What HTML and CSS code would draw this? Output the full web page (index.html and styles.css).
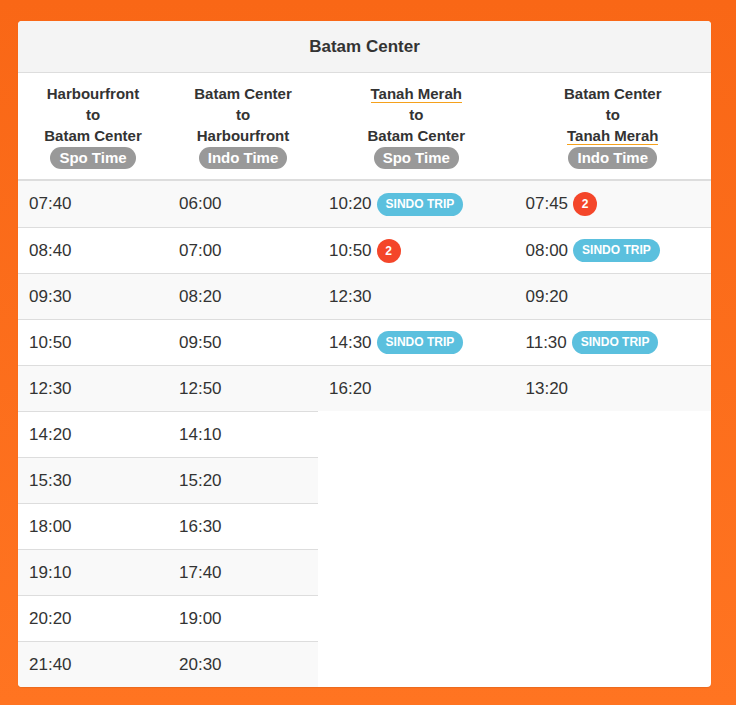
FILE: index.html
```html
<!DOCTYPE html>
<html lang="en">
<head>
<meta charset="utf-8">
<title>Batam Center Ferry Schedule</title>
<link rel="stylesheet" href="styles.css">
</head>
<body>
<div class="card">
  <div class="card-title">Batam Center</div>
  <div class="board">
    <section class="group group-left">
      <div class="head-row">
        <div class="head-cell"><span class="ln">Harbourfront</span><span class="ln">to</span><span class="ln">Batam Center</span><span class="zone">Spo Time</span></div>
        <div class="head-cell"><span class="ln">Batam Center</span><span class="ln">to</span><span class="ln">Harbourfront</span><span class="zone">Indo Time</span></div>
      </div>
      <div class="row"><div class="cell">07:40</div><div class="cell">06:00</div></div>
      <div class="row"><div class="cell">08:40</div><div class="cell">07:00</div></div>
      <div class="row"><div class="cell">09:30</div><div class="cell">08:20</div></div>
      <div class="row"><div class="cell">10:50</div><div class="cell">09:50</div></div>
      <div class="row"><div class="cell">12:30</div><div class="cell">12:50</div></div>
      <div class="row"><div class="cell">14:20</div><div class="cell">14:10</div></div>
      <div class="row"><div class="cell">15:30</div><div class="cell">15:20</div></div>
      <div class="row"><div class="cell">18:00</div><div class="cell">16:30</div></div>
      <div class="row"><div class="cell">19:10</div><div class="cell">17:40</div></div>
      <div class="row"><div class="cell">20:20</div><div class="cell">19:00</div></div>
      <div class="row"><div class="cell">21:40</div><div class="cell">20:30</div></div>
    </section>
    <section class="group group-right">
      <div class="head-row">
        <div class="head-cell"><span class="ln"><a class="place">Tanah Merah</a></span><span class="ln">to</span><span class="ln">Batam Center</span><span class="zone">Spo Time</span></div>
        <div class="head-cell"><span class="ln">Batam Center</span><span class="ln">to</span><span class="ln"><a class="place">Tanah Merah</a></span><span class="zone">Indo Time</span></div>
      </div>
      <div class="row"><div class="cell">10:20<span class="trip">SINDO TRIP</span></div><div class="cell">07:45<span class="count">2</span></div></div>
      <div class="row"><div class="cell">10:50<span class="count">2</span></div><div class="cell">08:00<span class="trip">SINDO TRIP</span></div></div>
      <div class="row"><div class="cell">12:30</div><div class="cell">09:20</div></div>
      <div class="row"><div class="cell">14:30<span class="trip">SINDO TRIP</span></div><div class="cell">11:30<span class="trip">SINDO TRIP</span></div></div>
      <div class="row"><div class="cell">16:20</div><div class="cell">13:20</div></div>
    </section>
  </div>
</div>
</body>
</html>
```
FILE: styles.css
```css
* { box-sizing: border-box; }

html, body {
  margin: 0;
  height: 100%;
}

body {
  background: linear-gradient(#f96716, #ff7421);
  padding: 21px 25px 17px 18px;
  font-family: "Liberation Sans", Arial, sans-serif;
  color: #333;
}

.card {
  width: 693px;
  background: #fff;
  border-radius: 4px;
  overflow: hidden;
  box-shadow: 0 1px 1px rgba(0, 0, 0, 0.08);
}

.card-title {
  height: 52px;
  padding-top: 1px;
  background: #f4f4f4;
  border-bottom: 1px solid #ddd;
  display: flex;
  align-items: center;
  justify-content: center;
  font-weight: bold;
  font-size: 17px;
}

.board {
  display: flex;
  align-items: flex-start;
}

.group-left { width: 300px; }
.group-right { flex: 1; }

.head-row {
  display: flex;
  border-bottom: 2px solid #ddd;
  padding: 10px 0 10px;
}

.head-cell {
  flex: 1 1 0;
  display: flex;
  flex-direction: column;
  align-items: center;
  font-weight: bold;
  font-size: 15px;
}

.ln {
  line-height: 21px;
  height: 21px;
}

.place {
  display: inline-block;
  color: #333;
  line-height: 16px;
  margin-top: 2px;
  border-bottom: 1px solid #f5a11c;
}

.zone {
  display: inline-block;
  margin-top: 1px;
  height: 22px;
  line-height: 22px;
  padding: 0 9px;
  border-radius: 11px;
  background: #999;
  color: #fff;
  font-size: 15px;
  font-weight: bold;
}

.row {
  display: flex;
  height: 46px;
  border-top: 1px solid #ddd;
}

.row:nth-child(2) { border-top: 0; }
.row:nth-child(even) { background: #f9f9f9; }

.cell {
  flex: 1 1 0;
  display: flex;
  align-items: center;
  gap: 5px;
  padding: 0 11px;
  font-size: 17px;
}

.trip {
  display: inline-block;
  height: 23px;
  line-height: 23px;
  padding: 0 9px;
  border-radius: 12px;
  background: #5bc0de;
  color: #fff;
  font-size: 12px;
  font-weight: bold;
}

.count {
  display: inline-flex;
  align-items: center;
  justify-content: center;
  width: 24px;
  height: 24px;
  border-radius: 50%;
  background: #f4462a;
  color: #fff;
  font-size: 12px;
  font-weight: bold;
}
```
